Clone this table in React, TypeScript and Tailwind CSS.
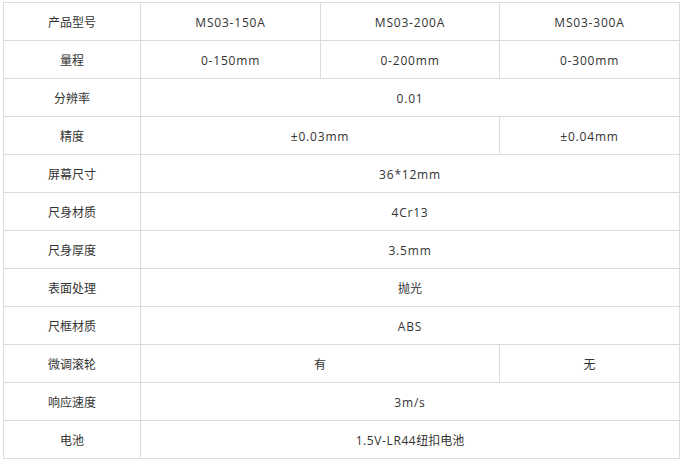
import React from "react";

const cell = "border border-[#dcdcdc] h-[38px] p-0 pt-[2px] text-center align-middle";
const num = cell + " tracking-[0.8px]";

export default function App() {
  return (
    <div className="w-[683px] h-[470px] bg-white pt-[2px] pl-[3px] text-[12px] text-[#333] font-['Open_Sans','Noto_Sans_CJK_SC',sans-serif]">
      <table className="table-fixed border-collapse w-[676px]">
        <colgroup>
          <col className="w-[137px]" />
          <col className="w-[180px]" />
          <col className="w-[179px]" />
          <col className="w-[180px]" />
        </colgroup>
        <tbody>
          <tr>
            <td className={cell}>产品型号</td>
            <td className={num}>MS03-150A</td>
            <td className={num}>MS03-200A</td>
            <td className={num}>MS03-300A</td>
          </tr>
          <tr>
            <td className={cell}>量程</td>
            <td className={num}>0-150mm</td>
            <td className={num}>0-200mm</td>
            <td className={num}>0-300mm</td>
          </tr>
          <tr>
            <td className={cell}>分辨率</td>
            <td className={num} colSpan={3}>0.01</td>
          </tr>
          <tr>
            <td className={cell}>精度</td>
            <td className={num} colSpan={2}>±0.03mm</td>
            <td className={num}>±0.04mm</td>
          </tr>
          <tr>
            <td className={cell}>屏幕尺寸</td>
            <td className={num} colSpan={3}>36*12mm</td>
          </tr>
          <tr>
            <td className={cell}>尺身材质</td>
            <td className={num} colSpan={3}>4Cr13</td>
          </tr>
          <tr>
            <td className={cell}>尺身厚度</td>
            <td className={num} colSpan={3}>3.5mm</td>
          </tr>
          <tr>
            <td className={cell}>表面处理</td>
            <td className={cell} colSpan={3}>抛光</td>
          </tr>
          <tr>
            <td className={cell}>尺框材质</td>
            <td className={num} colSpan={3}>ABS</td>
          </tr>
          <tr>
            <td className={cell}>微调滚轮</td>
            <td className={cell} colSpan={2}>有</td>
            <td className={cell}>无</td>
          </tr>
          <tr>
            <td className={cell}>响应速度</td>
            <td className={num} colSpan={3}>3m/s</td>
          </tr>
          <tr>
            <td className={cell}>电池</td>
            <td className={cell} colSpan={3}>
              <span className="tracking-[0.6px]">1.5V-LR44</span>纽扣电池
            </td>
          </tr>
        </tbody>
      </table>
    </div>
  );
}
